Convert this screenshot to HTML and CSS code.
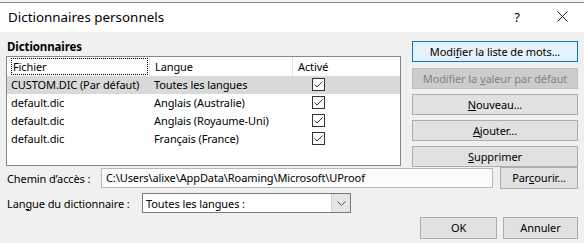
FILE: index.html
```html
<!DOCTYPE html>
<html lang="fr">
<head>
<meta charset="utf-8">
<link rel="stylesheet" href="styles.css">
</head>
<body>
<div class="topstrip"><span class="topline"></span></div>
<div class="titlebar">
  <span class="title">Dictionnaires personnels</span>
  <span class="help">?</span>
  <span class="close"><svg width="11" height="11" viewBox="0 0 11 11"><path d="M0.5 0.5 L10.5 10.5 M10.5 0.5 L0.5 10.5" stroke="#1a1a1a" stroke-width="1"/></svg></span>
</div>
<div class="content">
  <div class="main">
    <div class="leftcol">
      <div class="grouplabel">Dictionnaires</div>
      <div class="list">
        <div class="row header">
          <div class="c1"><span class="focus">Fichier</span></div>
          <div class="c2">Langue</div>
          <div class="c3">Activé</div>
        </div>
        <div class="row selected">
          <div class="c1">CUSTOM.DIC (Par défaut)</div>
          <div class="c2">Toutes les langues</div>
          <div class="c3"><svg class="cb" width="13" height="13" viewBox="0 0 13 13"><rect x="0.5" y="0.5" width="12" height="12" fill="#fff" stroke="#333"/><path d="M2.5 6.5 L5 9 L10.5 3.5" fill="none" stroke="#333" stroke-width="1"/></svg></div>
        </div>
        <div class="row">
          <div class="c1">default.dic</div>
          <div class="c2">Anglais (Australie)</div>
          <div class="c3"><svg class="cb" width="13" height="13" viewBox="0 0 13 13"><rect x="0.5" y="0.5" width="12" height="12" fill="#fff" stroke="#333"/><path d="M2.5 6.5 L5 9 L10.5 3.5" fill="none" stroke="#333" stroke-width="1"/></svg></div>
        </div>
        <div class="row">
          <div class="c1">default.dic</div>
          <div class="c2">Anglais (Royaume-Uni)</div>
          <div class="c3"><svg class="cb" width="13" height="13" viewBox="0 0 13 13"><rect x="0.5" y="0.5" width="12" height="12" fill="#fff" stroke="#333"/><path d="M2.5 6.5 L5 9 L10.5 3.5" fill="none" stroke="#333" stroke-width="1"/></svg></div>
        </div>
        <div class="row">
          <div class="c1">default.dic</div>
          <div class="c2">Français (France)</div>
          <div class="c3"><svg class="cb" width="13" height="13" viewBox="0 0 13 13"><rect x="0.5" y="0.5" width="12" height="12" fill="#fff" stroke="#333"/><path d="M2.5 6.5 L5 9 L10.5 3.5" fill="none" stroke="#333" stroke-width="1"/></svg></div>
        </div>
      </div>
    </div>
    <div class="rightcol">
      <button class="btn focused">Modi<u>f</u>ier la liste de mots...</button>
      <button class="btn disabled">Modifier la <u>v</u>aleur par défaut</button>
      <button class="btn"><u>N</u>ouveau...</button>
      <button class="btn"><u>A</u>jouter...</button>
      <button class="btn"><u>S</u>upprimer</button>
    </div>
  </div>
  <div class="pathrow">
    <span class="label pathlabel">Chemin d’accès :</span>
    <div class="pathbox">C:\Users\alixe\AppData\Roaming\Microsoft\UProof</div>
    <button class="btn browse">Par<u>c</u>ourir...</button>
  </div>
  <div class="langrow">
    <span class="label langlabel">Lan<u>g</u>ue du dictionnaire :</span>
    <div class="combo">
      <span class="combotext">Toutes les langues :</span>
      <span class="arrow"><svg width="9" height="5" viewBox="0 0 9 5"><path d="M0.5 0.5 L4.5 4.5 L8.5 0.5" fill="none" stroke="#555" stroke-width="1"/></svg></span>
    </div>
  </div>
  <div class="okrow">
    <button class="btn ok">OK</button>
    <button class="btn cancel">Annuler</button>
  </div>
</div>
</body>
</html>
```

FILE: styles.css
```css
* { box-sizing: border-box; }
html, body {
  margin: 0;
  padding: 0;
}
body {
  width: 584px;
  height: 243px;
  overflow: hidden;
  background: #f0f0f0;
  font-family: "Noto Sans", "Open Sans", sans-serif;
  font-size: 11px;
  letter-spacing: -0.1px;
  color: #000;
}
.topstrip {
  height: 3px;
  background: #f3f3f3;
  border-bottom: 1px solid #8a8a8a;
}
.titlebar {
  height: 29px;
  background: #fff;
  display: flex;
  align-items: center;
  padding-left: 8px;
}
.title {
  flex: 1;
  font-size: 13.4px;
  letter-spacing: 0;
  margin-top: -2px;
}
.help {
  width: 46px;
  text-align: center;
  font-size: 13px;
  margin-top: -2px;
}
.close {
  width: 44px;
  display: flex;
  justify-content: center;
  align-items: center;
  margin-top: -2px;
}
.content {
  padding: 0 6px 0 6px;
}
.main {
  display: flex;
  height: 135px;
}
.leftcol {
  width: 395px;
}
.grouplabel {
  font-weight: bold;
  margin-top: 6px;
  margin-left: 1px;
  height: 18px;
  line-height: 18px;
  font-size: 11.5px;
}
.list {
  height: 110px;
  background: #fff;
  border: 1px solid #828790;
}
.row {
  display: flex;
  height: 18px;
  line-height: 18px;
  white-space: nowrap;
}
.row.header {
  height: 19px;
}
.row.selected {
  background: #d9d9d9;
}
.c1 {
  width: 142px;
  padding-left: 4px;
  overflow: hidden;
}
.c2 {
  width: 143px;
  padding-left: 5px;
}
.c3 {
  width: 60px;
  padding-left: 5px;
}
.row .c3 .cb {
  margin-left: 15px;
  vertical-align: -2px;
}
.header .c2, .header .c3 {
  border-left: 1px solid #e5e5e5;
  line-height: 19px;
}
.header .c1 {
  padding-left: 4px;
}
.focus {
  display: block;
  margin-left: 0;
  width: 137px;
  height: 17px;
  line-height: 16px;
  margin-top: 1px;
  border: 1px dotted #000;
  padding-left: 1px;
}
.rightcol {
  margin-left: 11px;
  padding-top: 9px;
  display: flex;
  flex-direction: column;
  gap: 5px;
}
.btn {
  font-family: inherit;
  font-size: 11px;
  letter-spacing: -0.1px;
  color: #000;
  background: #e1e1e1;
  border: 1px solid #adadad;
  height: 21px;
  padding: 0;
  margin: 0;
  line-height: 18px;
}
.rightcol .btn {
  width: 166px;
}
.rightcol .btn.focused {
  margin-bottom: 1px;
}
.btn.focused {
  background: #e5f1fb;
  border: 1px solid #0078d7;
}
.btn.disabled {
  background: #cccccc;
  border-color: #bfbfbf;
  color: #838383;
}
.pathrow {
  display: flex;
  align-items: center;
  height: 22px;
}
.label {
  padding-left: 1px;
  white-space: nowrap;
}
.pathlabel {
  width: 95px;
}
.langlabel {
  width: 136px;
}
.pathbox {
  width: 392px;
  height: 20px;
  line-height: 18px;
  background: #fbfbfb;
  border: 1px solid #b8b8b8;
  padding-left: 4px;
  white-space: nowrap;
  overflow: hidden;
}
.browse {
  margin-left: 7px;
  width: 78px;
  height: 22px;
}
.langrow {
  display: flex;
  align-items: center;
  margin-top: 4px;
  height: 20px;
}
.combo {
  width: 209px;
  height: 20px;
  background: #fff;
  border: 1px solid #7a7a7a;
  display: flex;
  align-items: center;
}
.combotext {
  flex: 1;
  padding-left: 3px;
}
.arrow {
  width: 19px;
  height: 18px;
  background: #e5e5e5;
  border-left: 1px solid #d0d0d0;
  display: flex;
  align-items: center;
  justify-content: center;
}
.okrow {
  display: flex;
  justify-content: flex-end;
  margin-top: 4px;
  gap: 6px;
}
.ok {
  width: 77px;
  height: 22px;
}
.cancel {
  width: 75px;
  height: 22px;
}
```
